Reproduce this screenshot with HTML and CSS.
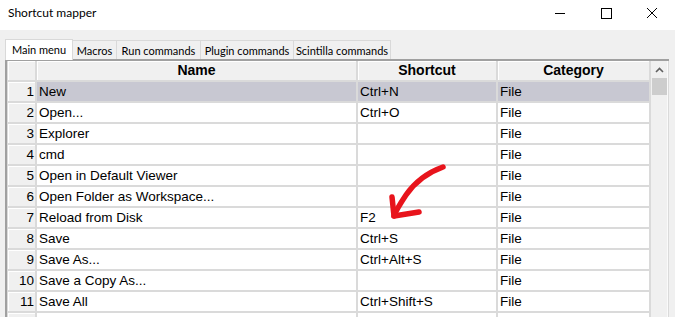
FILE: index.html
```html
<!DOCTYPE html>
<html>
<head>
<meta charset="utf-8">
<link rel="stylesheet" href="styles.css">
</head>
<body>
<div class="window">
  <header class="titlebar">
    <span class="title">Shortcut mapper</span>
    <div class="controls">
      <span class="ctl"><svg width="12" height="12" viewBox="0 0 12 12"><path d="M1 6.5h10" stroke="#000" stroke-width="1"/></svg></span>
      <span class="ctl"><svg width="12" height="12" viewBox="0 0 12 12"><rect x="1.5" y="1.5" width="10" height="10" fill="none" stroke="#000" stroke-width="1"/></svg></span>
      <span class="ctl"><svg width="12" height="12" viewBox="0 0 12 12"><path d="M1 1L11 11M11 1L1 11" stroke="#000" stroke-width="1"/></svg></span>
    </div>
  </header>
  <nav class="tabs">
    <span class="tab active w1">Main menu</span>
    <span class="tab w2">Macros</span>
    <span class="tab w3">Run commands</span>
    <span class="tab w4">Plugin commands</span>
    <span class="tab w5">Scintilla commands</span>
  </nav>
  <section class="panel">
    <div class="grid">
      <div class="hd corner"></div><div class="hd">Name</div><div class="hd">Shortcut</div><div class="hd">Category</div>
      <div class="rh">1</div><div class="c sel">New</div><div class="c sel">Ctrl+N</div><div class="c sel">File</div>
      <div class="rh">2</div><div class="c">Open...</div><div class="c">Ctrl+O</div><div class="c">File</div>
      <div class="rh">3</div><div class="c">Explorer</div><div class="c"></div><div class="c">File</div>
      <div class="rh">4</div><div class="c">cmd</div><div class="c"></div><div class="c">File</div>
      <div class="rh">5</div><div class="c">Open in Default Viewer</div><div class="c"></div><div class="c">File</div>
      <div class="rh">6</div><div class="c">Open Folder as Workspace...</div><div class="c"></div><div class="c">File</div>
      <div class="rh">7</div><div class="c">Reload from Disk</div><div class="c">F2</div><div class="c">File</div>
      <div class="rh">8</div><div class="c">Save</div><div class="c">Ctrl+S</div><div class="c">File</div>
      <div class="rh">9</div><div class="c">Save As...</div><div class="c">Ctrl+Alt+S</div><div class="c">File</div>
      <div class="rh">10</div><div class="c">Save a Copy As...</div><div class="c"></div><div class="c">File</div>
      <div class="rh">11</div><div class="c">Save All</div><div class="c">Ctrl+Shift+S</div><div class="c">File</div>
      <div class="rh"></div><div class="c"></div><div class="c"></div><div class="c"></div>
    </div>
    <div class="scrollbar">
      <div class="arrow"><svg width="9" height="6" viewBox="0 0 9 6"><path d="M1 5L4.5 1.5L8 5" fill="none" stroke="#606060" stroke-width="1.6"/></svg></div>
      <div class="thumb"></div>
    </div>
  </section>
  <svg class="annot" width="675" height="317" viewBox="0 0 675 317">
    <path d="M443 167 C429 172 415 182 406 195 C400 204 396 210 394 216" fill="none" stroke="#e8141c" stroke-width="5.5" stroke-linecap="round"/>
    <path d="M392 197 L394 216 L419 212" fill="none" stroke="#e8141c" stroke-width="5.5" stroke-linecap="round" stroke-linejoin="round"/>
  </svg>
</div>
</body>
</html>
```

FILE: styles.css
```css
* { box-sizing: border-box; }
html, body { margin: 0; padding: 0; }
body {
  width: 675px;
  height: 317px;
  overflow: hidden;
  background: #f0f0f0;
  font-family: "Liberation Sans", Arial, sans-serif;
}
.window { position: relative; width: 675px; height: 317px; overflow: hidden; }
.titlebar {
  height: 30px;
  background: #fff;
  display: flex;
  align-items: center;
  justify-content: space-between;
  padding-left: 8px;
}
.title {
  font-family: Lato, "Open Sans", sans-serif;
  font-size: 12px;
  color: #000;
  margin-top: -5px;
}
.controls { display: flex; height: 30px; margin-top: -4px; }
.ctl {
  width: 46px;
  display: flex;
  align-items: center;
  justify-content: center;
}
.tabs {
  display: flex;
  align-items: flex-end;
  padding-left: 5px;
  margin-top: 8px;
  height: 21px;
  font-family: Lato, "Open Sans", sans-serif;
  font-size: 11px;
  color: #000;
}
.tab {
  height: 19px;
  display: flex;
  align-items: center;
  justify-content: center;
  border: 1px solid #d9d9d9;
  border-bottom: none;
  border-left: none;
  background: #f0f0f0;
  white-space: nowrap;
}
.tab.active {
  height: 21px;
  background: #fff;
  border-left: 1px solid #d9d9d9;
  padding-bottom: 2px;
  margin-bottom: -1px;
  position: relative;
  z-index: 1;
}
.w1 { width: 68px; }
.w2 { width: 44px; }
.w3 { width: 84px; }
.w4 { width: 93px; }
.w5 { width: 97px; }
.panel {
  display: flex;
  margin-left: 5px;
  width: 664px;
  border-top: 2px solid #a0a0a0;
  border-left: 2px solid #a0a0a0;
  background: #dadada;
}
.grid {
  display: grid;
  grid-template-columns: 27px 319px 138px 151px;
  grid-auto-rows: 19px;
  gap: 2px;
  padding: 0 2px 0 1px;
  background: #dadada;
  font-size: 13.5px;
  color: #000;
}
.hd {
  background: #f0f0f0;
  box-shadow: inset 1px 1px 0 #fff;
  font-weight: bold;
  font-size: 14px;
  text-align: center;
  line-height: 19px;
}
.rh {
  background: #f0f0f0;
  box-shadow: inset 1px 1px 0 #fff;
  text-align: right;
  padding-right: 1px;
  line-height: 19px;
}
.c {
  background: #fff;
  padding-left: 2px;
  line-height: 19px;
  white-space: nowrap;
  overflow: hidden;
}
.c.sel { background: #c8c8d2; }
.scrollbar {
  width: 17px;
  background: #f0f0f0;
  border-right: 1px solid #fafafa;
  display: flex;
  flex-direction: column;
  align-items: center;
}
.arrow {
  height: 17px;
  display: flex;
  align-items: center;
  justify-content: center;
}
.thumb {
  width: 15px;
  height: 17px;
  background: #cdcdcd;
}
.annot { position: absolute; left: 0; top: 0; pointer-events: none; }
```
